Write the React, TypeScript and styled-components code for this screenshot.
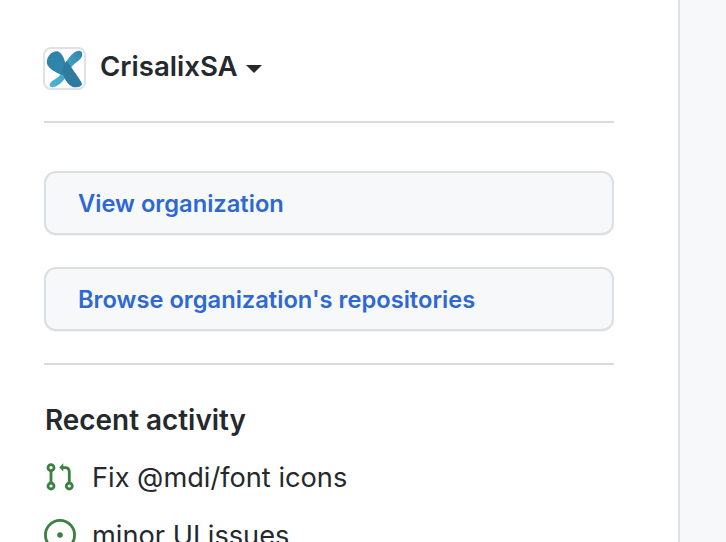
import styled, { createGlobalStyle } from 'styled-components';

const GlobalStyle = createGlobalStyle`
  html, body {
    margin: 0;
    height: 100%;
    overflow: hidden;
    background: #fff;
    font-family: Inter, "Liberation Sans", sans-serif;
    color: #24292e;
  }
`;

const Page = styled.div`
  display: flex;
  width: 726px;
  height: 542px;
  overflow: hidden;
`;

const Sidebar = styled.aside`
  box-sizing: border-box;
  width: 680px;
  flex-shrink: 0;
  padding: 47px 64px 0 44px;
  border-right: 2px solid #dfe2e5;
`;

const Rest = styled.div`
  flex: 1;
  background: #f6f8fa;
`;

const OrgSwitcher = styled.div`
  display: flex;
  align-items: center;
  height: 43px;
  margin-left: -1px;
`;

const Avatar = styled.div`
  box-sizing: border-box;
  width: 43px;
  height: 43px;
  border: 2px solid #dfe2e5;
  border-radius: 8px;
  overflow: hidden;
  background: #fff;
  flex-shrink: 0;
`;

const OrgName = styled.span`
  margin: -5px 0 0 14px;
  font-size: 27.6px;
  line-height: 34px;
  font-weight: 600;
`;

const Caret = styled.span`
  width: 0;
  height: 0;
  margin: 1px 0 0 8px;
  border-left: 8px solid transparent;
  border-right: 8px solid transparent;
  border-top: 8px solid #24292e;
`;

const Divider = styled.hr`
  height: 2px;
  margin: 0;
  border: none;
  background: #d9dcdf;
`;

const HeaderDivider = styled(Divider)`
  margin-top: 31px;
`;

const Actions = styled.div`
  display: flex;
  flex-direction: column;
  gap: 32px;
  margin: 48px 0 32px;
`;

const ActionButton = styled.a`
  box-sizing: border-box;
  display: flex;
  align-items: center;
  height: 64px;
  padding: 0 32px;
  border: 2px solid #dcdfe2;
  border-radius: 12px;
  background: #f6f8fa;
  box-shadow: 0 1px 0 rgba(27, 31, 35, 0.05);
  color: #2f68d4;
  font-size: 23.7px;
  font-weight: 600;
`;

const SectionTitle = styled.h2`
  margin: 38px 0 0 1px;
  font-size: 27.9px;
  line-height: 34px;
  font-weight: 600;
`;

const ActivityList = styled.ul`
  display: flex;
  flex-direction: column;
  gap: 24px;
  margin: 23px 0 0;
  padding: 0;
  list-style: none;
`;

const ActivityItem = styled.li`
  display: flex;
  align-items: center;
  gap: 16px;
  height: 34px;
  font-size: 27.2px;
  white-space: nowrap;
`;

const StatusIcon = styled.svg`
  width: 32px;
  height: 32px;
  flex-shrink: 0;
  fill: none;
  stroke: #3b8040;
  stroke-width: 2.8;
`;

const IconFill = styled.path`
  fill: #3b8040;
  stroke: none;
`;

function Logo() {
  return (
    <svg viewBox="0 0 126 126" width="39" height="39">
      <defs>
        <linearGradient id="light" x1="0" y1="1" x2="1" y2="0">
          <stop offset="0" stopColor="#4fb6d2" />
          <stop offset="0.6" stopColor="#3f9fc0" />
          <stop offset="1" stopColor="#2f86aa" />
        </linearGradient>
      </defs>
      <path d="M112 6c12 2 12 20-2 30-14 10-28 22-36 42-10 22-28 40-46 45-16 3-16-11-6-19 14-10 28-14 34-34C66 40 90 4 112 6z" fill="url(#light)" />
      <path d="M6 46C4 22 28 2 44 9c14 6 22 32 26 56 2 12-10 22-18 18C36 75 10 64 6 46z" fill="#2f84a9" />
      <path d="M70 38c10 14 32 44 48 70 6 12-12 18-28 15C70 114 56 88 58 68c1-12 6-24 12-30z" fill="#2f7a9f" />
    </svg>
  );
}

function PullRequestIcon() {
  return (
    <StatusIcon viewBox="0 0 32 32">
      <circle cx="7" cy="6.7" r="3" />
      <circle cx="7" cy="25" r="3" />
      <circle cx="25.3" cy="25" r="3" />
      <path d="M7 9.7V22M25.3 22V11q0-4.3-4.3-4.3h-3" />
      <IconFill d="M15.3 6.5 19.3 2.3v8.3z" />
    </StatusIcon>
  );
}

function IssueIcon() {
  return (
    <StatusIcon viewBox="0 0 32 32">
      <circle cx="16" cy="16" r="14.6" />
      <IconFill d="M16 13.2a2.8 2.8 0 1 0 0 5.6 2.8 2.8 0 0 0 0-5.6z" />
    </StatusIcon>
  );
}

export default function App() {
  return (
    <>
      <GlobalStyle />
      <Page>
        <Sidebar>
          <OrgSwitcher>
            <Avatar>
              <Logo />
            </Avatar>
            <OrgName>CrisalixSA</OrgName>
            <Caret />
          </OrgSwitcher>
          <HeaderDivider />
          <Actions>
            <ActionButton>View organization</ActionButton>
            <ActionButton>Browse organization's repositories</ActionButton>
          </Actions>
          <Divider />
          <SectionTitle>Recent activity</SectionTitle>
          <ActivityList>
            <ActivityItem>
              <PullRequestIcon />
              Fix @mdi/font icons
            </ActivityItem>
            <ActivityItem>
              <IssueIcon />
              minor UI issues
            </ActivityItem>
          </ActivityList>
        </Sidebar>
        <Rest />
      </Page>
    </>
  );
}
